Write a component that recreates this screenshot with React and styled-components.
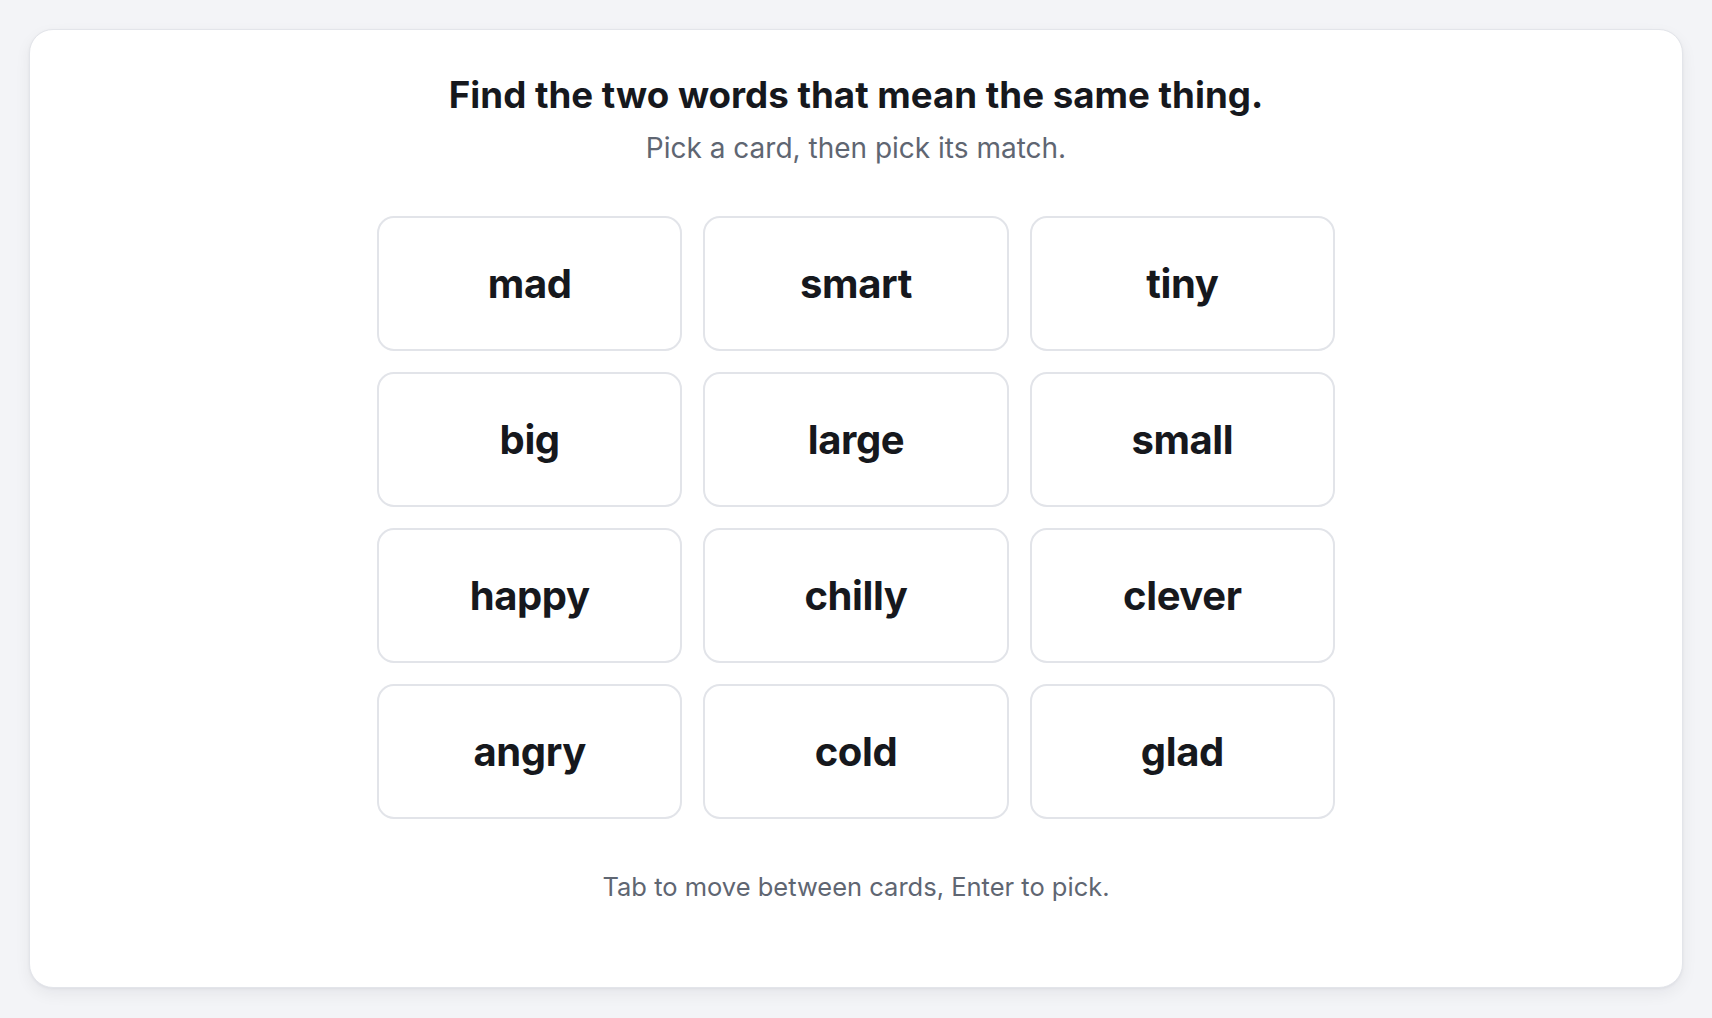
import React from "react";
import styled, { createGlobalStyle } from "styled-components";

const Global = createGlobalStyle`
  html, body { margin: 0; padding: 0; }
  body {
    background: #f3f4f7;
    font-family: Inter, "Noto Sans", "Liberation Sans", sans-serif;
    -webkit-font-smoothing: antialiased;
  }
  * { box-sizing: border-box; }
`;

const Page = styled.div`
  height: 100vh;
  padding: 29px 29px 30px 29px;
  display: flex;
`;

const Panel = styled.main`
  flex: 1;
  background: #ffffff;
  border: 1px solid #e3e5ea;
  border-radius: 24px;
  box-shadow: 0 6px 16px rgba(15, 23, 42, 0.06), 0 1px 3px rgba(15, 23, 42, 0.05);
  display: flex;
  flex-direction: column;
  align-items: center;
  padding-top: 43px;
`;

const Title = styled.h1`
  margin: 0;
  font-size: 36.7px;
  line-height: 44px;
  font-weight: 700;
  color: #16181d;
`;

const Subtitle = styled.p`
  margin: 13px 0 0;
  font-size: 28px;
  line-height: 36px;
  font-weight: 400;
  color: #5f6672;
`;

const Grid = styled.div`
  margin-top: 50px;
  width: 958px;
  display: grid;
  grid-template-columns: repeat(3, 1fr);
  gap: 21px;
`;

const WordCard = styled.button`
  height: 135px;
  background: #ffffff;
  border: 2px solid #e2e4e9;
  border-radius: 17px;
  font-family: inherit;
  font-size: 40px;
  font-weight: 700;
  color: #16181d;
  letter-spacing: -0.01em;
  cursor: pointer;
  display: flex;
  align-items: center;
  justify-content: center;
  padding: 0;
`;

const Hint = styled.p`
  margin: 52px 0 0;
  font-size: 25.5px;
  line-height: 32px;
  color: #5f6672;
`;

const words = [
  "mad", "smart", "tiny",
  "big", "large", "small",
  "happy", "chilly", "clever",
  "angry", "cold", "glad",
];

export default function App() {
  return (
    <>
      <Global />
      <Page>
        <Panel>
          <Title>Find the two words that mean the same thing.</Title>
          <Subtitle>Pick a card, then pick its match.</Subtitle>
          <Grid>
            {words.map((w) => (
              <WordCard key={w}>{w}</WordCard>
            ))}
          </Grid>
          <Hint>Tab to move between cards, Enter to pick.</Hint>
        </Panel>
      </Page>
    </>
  );
}
